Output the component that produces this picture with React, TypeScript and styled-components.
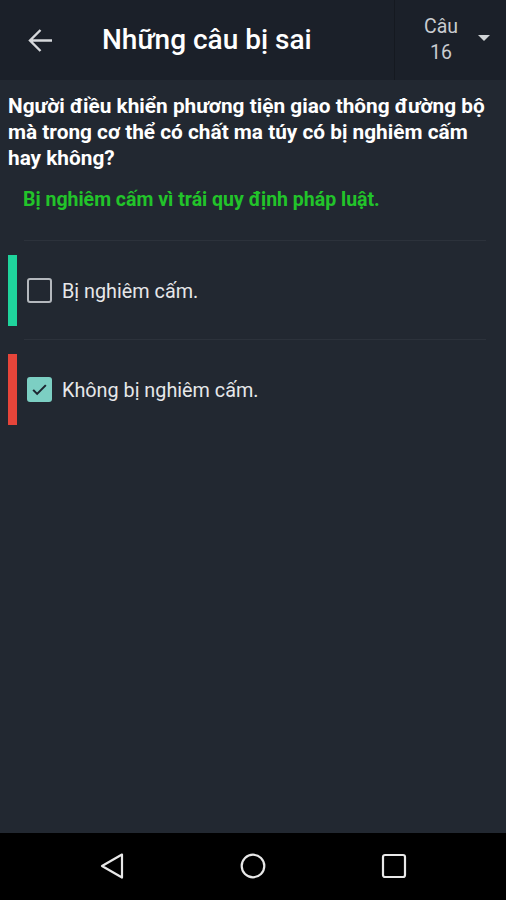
import React from "react";
import styled, { createGlobalStyle } from "styled-components";

const Global = createGlobalStyle`
  html, body { margin: 0; padding: 0; background: #222831; }
  body { font-family: Roboto, "Noto Sans", Arial, sans-serif; }
`;

const Screen = styled.div`
  width: 506px;
  height: 900px;
  display: flex;
  flex-direction: column;
  background: #222831;
  overflow: hidden;
`;

const Header = styled.header`
  height: 80px;
  flex: none;
  display: flex;
  align-items: stretch;
  background: #1b2029;
`;

const BackButton = styled.div`
  width: 80px;
  display: flex;
  align-items: center;
  justify-content: center;
  color: #d6d8db;
`;

const Title = styled.h1`
  flex: 1;
  margin: 0;
  padding-left: 22px;
  padding-bottom: 2px;
  display: flex;
  align-items: center;
  font-family: Roboto, Arial, sans-serif;
  font-weight: 500;
  font-size: 28px;
  color: #ffffff;
`;

const Picker = styled.div`
  width: 112px;
  border-left: 1px solid #151920;
  display: flex;
  align-items: center;
  padding-left: 17px;
  gap: 8px;
  box-sizing: border-box;
`;

const PickerLabel = styled.div`
  display: flex;
  flex-direction: column;
  align-items: center;
  font-size: 19.5px;
  line-height: 26px;
  color: #c9ccd0;
  width: 58px;
  margin-top: -1px;
`;

const Caret = styled.div`
  width: 0;
  height: 0;
  border-left: 6.5px solid transparent;
  border-right: 6.5px solid transparent;
  border-top: 6.5px solid #d0d3d6;
  margin-top: -4px;
`;

const Body = styled.main`
  flex: 1;
  display: flex;
  flex-direction: column;
  padding-top: 13px;
`;

const Question = styled.p`
  margin: 0;
  padding: 0 10px 0 8px;
  font-weight: 700;
  font-size: 20.8px;
  line-height: 26px;
  color: #ffffff;
`;

const Explanation = styled.p`
  margin: 18px 0 0;
  padding-left: 23px;
  font-weight: 700;
  font-size: 19.5px;
  line-height: 22px;
  color: #22c42a;
`;

const Divider = styled.div`
  height: 1px;
  margin: 0 20px 0 24px;
  background: #2c323b;
`;

const Spacer = styled.div<{ $h: number }>`
  height: ${(p) => p.$h}px;
`;

const OptionRow = styled.div`
  display: flex;
  align-items: stretch;
  padding: 14px 0 13px 8px;
`;

const Bar = styled.div<{ $color: string }>`
  width: 9px;
  height: 71px;
  background: ${(p) => p.$color};
`;

const OptionContent = styled.div`
  display: flex;
  align-items: center;
  gap: 10px;
  padding-left: 10px;
`;

const Box = styled.div<{ $checked: boolean }>`
  width: 25px;
  height: 25px;
  box-sizing: border-box;
  border-radius: 3px;
  border: ${(p) => (p.$checked ? "none" : "2px solid #b4b8bd")};
  background: ${(p) => (p.$checked ? "#7ccfc3" : "transparent")};
  display: flex;
  align-items: center;
  justify-content: center;
`;

const OptionText = styled.span`
  font-size: 19.8px;
  color: #e6e7e9;
  margin-top: 1px;
`;

const NavBar = styled.nav`
  height: 67px;
  flex: none;
  background: #000000;
  display: flex;
  align-items: center;
  justify-content: center;
  gap: 115px;
  padding-bottom: 2px;
  box-sizing: border-box;
`;

const NavIcon = styled.div`
  width: 26px;
  height: 26px;
  display: flex;
  align-items: center;
  justify-content: center;
`;

const options = [
  { text: "Bị nghiêm cấm.", color: "#1fd49c", checked: false },
  { text: "Không bị nghiêm cấm.", color: "#e6453a", checked: true },
];

export default function App() {
  return (
    <>
      <Global />
      <Screen>
        <Header>
          <BackButton>
            <svg width="25" height="25" viewBox="0 0 25 25">
              <path d="M24 12.5H2.5M12.5 2L2 12.5 12.5 23" fill="none" stroke="currentColor" strokeWidth="2.4" />
            </svg>
          </BackButton>
          <Title>Những câu bị sai</Title>
          <Picker>
            <PickerLabel>
              <span>Câu</span>
              <span>16</span>
            </PickerLabel>
            <Caret />
          </Picker>
        </Header>
        <Body>
          <Question>
            Người điều khiển phương tiện giao thông đường bộ mà trong cơ thể có chất ma túy có bị nghiêm cấm hay không?
          </Question>
          <Explanation>Bị nghiêm cấm vì trái quy định pháp luật.</Explanation>
          <Spacer $h={29} />
          {options.map((o) => (
            <React.Fragment key={o.text}>
              <Divider />
              <OptionRow>
                <Bar $color={o.color} />
                <OptionContent>
                  <Box $checked={o.checked}>
                    {o.checked && (
                      <svg width="19" height="19" viewBox="0 0 24 24">
                        <path d="M4 12.5l5 5L20 6.5" fill="none" stroke="#1d2530" strokeWidth="2.6" />
                      </svg>
                    )}
                  </Box>
                  <OptionText>{o.text}</OptionText>
                </OptionContent>
              </OptionRow>
            </React.Fragment>
          ))}
        </Body>
        <NavBar>
          <NavIcon>
            <svg width="26" height="28" viewBox="0 0 26 28">
              <path d="M23 2.5 L3 14 L23 25.5 Z" fill="none" stroke="#e8e8e8" strokeWidth="2.2" strokeLinejoin="round" />
            </svg>
          </NavIcon>
          <NavIcon>
            <svg width="26" height="26" viewBox="0 0 26 26">
              <circle cx="13" cy="13" r="11.3" fill="none" stroke="#e8e8e8" strokeWidth="2.2" />
            </svg>
          </NavIcon>
          <NavIcon>
            <svg width="26" height="26" viewBox="0 0 26 26">
              <rect x="2" y="2" width="22" height="22" rx="2" fill="none" stroke="#e8e8e8" strokeWidth="2.2" />
            </svg>
          </NavIcon>
        </NavBar>
      </Screen>
    </>
  );
}
